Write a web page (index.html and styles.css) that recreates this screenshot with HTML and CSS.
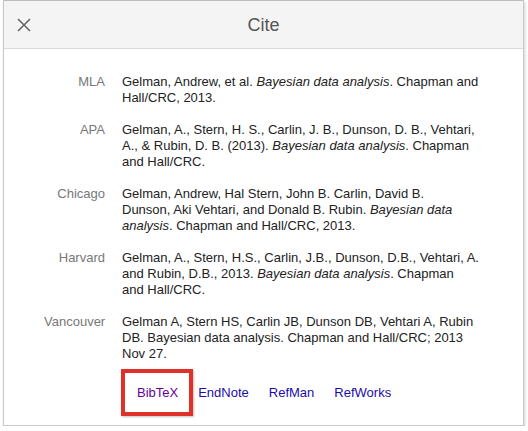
FILE: index.html
```html
<!DOCTYPE html>
<html>
<head>
<meta charset="utf-8">
<link rel="stylesheet" href="styles.css">
</head>
<body>
<div class="dialog">
  <div class="header">
    <button class="close" aria-label="Close">
      <svg width="14" height="14" viewBox="0 0 14 14"><path d="M1 1L13 13M13 1L1 13" stroke="#666" stroke-width="1.6" fill="none"/></svg>
    </button>
    <div class="title">Cite</div>
  </div>
  <div class="body">
    <div class="entries">
      <div class="label">MLA</div>
      <div class="cite">Gelman, Andrew, et al. <i>Bayesian data analysis</i>. Chapman and Hall/CRC, 2013.</div>
      <div class="label">APA</div>
      <div class="cite">Gelman, A., Stern, H. S., Carlin, J. B., Dunson, D. B., Vehtari, A., &amp; Rubin, D. B. (2013). <i>Bayesian data analysis</i>. Chapman and Hall/CRC.</div>
      <div class="label">Chicago</div>
      <div class="cite">Gelman, Andrew, Hal Stern, John B. Carlin, David B.<br>Dunson, Aki Vehtari, and Donald B. Rubin. <i>Bayesian data analysis</i>. Chapman and Hall/CRC, 2013.</div>
      <div class="label">Harvard</div>
      <div class="cite">Gelman, A., Stern, H.S., Carlin, J.B., Dunson, D.B., Vehtari, A. and Rubin, D.B., 2013. <i>Bayesian data analysis</i>. Chapman and Hall/CRC.</div>
      <div class="label">Vancouver</div>
      <div class="cite">Gelman A, Stern HS, Carlin JB, Dunson DB, Vehtari A, Rubin DB. Bayesian data analysis. Chapman and Hall/CRC; 2013 Nov 27.</div>
    </div>
    <div class="links">
      <a class="link visited highlighted" href="#">BibTeX<span class="mark"></span></a>
      <a class="link" href="#">EndNote</a>
      <a class="link" href="#">RefMan</a>
      <a class="link" href="#">RefWorks</a>
    </div>
  </div>
</div>
</body>
</html>
```
FILE: styles.css
```css
html, body {
  margin: 0;
  padding: 0;
  background: #fff;
}
body {
  font-family: Arial, "Liberation Sans", sans-serif;
  font-size: 13px;
  line-height: 16px;
  color: #222;
}
.dialog {
  margin-left: 3px;
  width: 519px;
  border: 1px solid #c8c8c8;
  border-top-color: #bdbdbd;
  background: #fff;
  box-shadow: 1px 2px 3px rgba(0,0,0,0.18);
}
.header {
  position: relative;
  height: 47px;
  background: #f4f4f4;
  border-bottom: 1px solid #d9d9d9;
  display: flex;
  align-items: center;
  justify-content: center;
}
.close {
  position: absolute;
  left: 12px;
  top: 16px;
  width: 16px;
  height: 16px;
  padding: 0;
  border: 0;
  background: none;
  display: flex;
  align-items: center;
  justify-content: center;
}
.title {
  font-size: 18px;
  color: #555;
  line-height: 22px;
  margin-top: 1px;
}
.body {
  padding: 25px 0 24px 40px;
}
.entries {
  display: grid;
  grid-template-columns: 61px 357px;
  column-gap: 17px;
  row-gap: 16px;
}
.label {
  text-align: right;
  color: #777;
}
.cite {
  color: #222;
}
.links {
  display: flex;
  margin-top: 23px;
  margin-left: 83px;
}
.link {
  position: relative;
  padding: 0 10px;
  color: #1a0dab;
  text-decoration: none;
}
.link.visited {
  color: #660099;
}
.mark {
  position: absolute;
  left: -6px;
  top: -16px;
  width: 64px;
  height: 39px;
  border: 4px solid #e0302a;
  box-shadow: 1px 1px 2px rgba(0,0,0,0.25);
}
```
